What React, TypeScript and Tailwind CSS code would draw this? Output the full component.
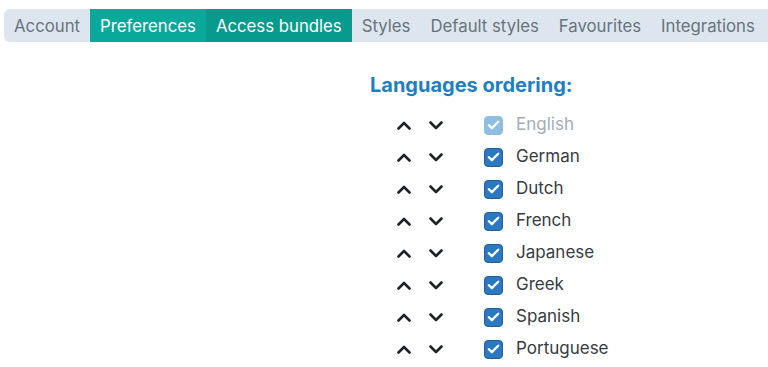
import React from 'react';

const TABS = [
  { label: 'Account', state: 'idle' },
  { label: 'Preferences', state: 'active' },
  { label: 'Access bundles', state: 'current' },
  { label: 'Styles', state: 'idle' },
  { label: 'Default styles', state: 'idle' },
  { label: 'Favourites', state: 'idle' },
  { label: 'Integrations', state: 'idle' },
];

const LANGUAGES = ['English', 'German', 'Dutch', 'French', 'Japanese', 'Greek', 'Spanish', 'Portuguese'];

function Chevron({ up }: { up?: boolean }) {
  return (
    <svg width="14" height="9" viewBox="0 0 14 9" className="text-[#1d2329]">
      <path
        d={up ? 'M1.5 7.5 L7 2 L12.5 7.5' : 'M1.5 1.5 L7 7 L12.5 1.5'}
        fill="none"
        stroke="currentColor"
        strokeWidth="2.6"
        strokeLinecap="round"
        strokeLinejoin="round"
      />
    </svg>
  );
}

function Checkbox({ disabled }: { disabled?: boolean }) {
  return (
    <span
      className={`w-[19px] h-[19px] rounded-[4px] flex items-center justify-center border ${
        disabled ? 'bg-[#8fbee3] border-[#8fbee3]' : 'bg-[#2a79c2] border-[#1e5f9c]'
      }`}
    >
      <svg width="13" height="10" viewBox="0 0 13 10">
        <path d="M1.8 5.2 L4.9 8.1 L11.2 1.8" fill="none" stroke="white" strokeWidth="2.3" strokeLinecap="round" strokeLinejoin="round" />
      </svg>
    </span>
  );
}

export default function App() {
  return (
    <div className="w-[768px] h-[367px] bg-white overflow-hidden font-['Inter','Liberation_Sans',sans-serif]">
      {/* Tab bar */}
      <div className="ml-[4px] mt-[9px] h-[33px] w-[800px] bg-[#dde6ee] rounded-l-[6px] flex text-[16.75px]">
        {TABS.map((t) => (
          <div
            key={t.label}
            className={`px-[10px] pt-[2px] flex items-center whitespace-nowrap ${
              t.state === 'active'
                ? 'bg-[#0aa89a] text-white'
                : t.state === 'current'
                ? 'bg-[#089a8c] text-white'
                : 'text-[#68737d]'
            }`}
          >
            {t.label}
          </div>
        ))}
      </div>

      {/* Languages ordering */}
      <div className="ml-[370px] mt-[29px]">
        <h2 className="text-[20px] font-bold text-[#1e7ec4] leading-[28px]">Languages ordering:</h2>
        <div className="mt-[10px] flex flex-col">
          {LANGUAGES.map((lang, i) => (
            <div key={lang} className="h-[32px] flex items-center">
              <button className="ml-[18px] w-[32px] h-[32px] flex items-center justify-center">
                <Chevron up />
              </button>
              <button className="w-[32px] h-[32px] flex items-center justify-center">
                <Chevron />
              </button>
              <div className="ml-[32px]">
                <Checkbox disabled={i === 0} />
              </div>
              <span className={`ml-[13px] text-[17px] ${i === 0 ? 'text-[#a3adb7]' : 'text-[#363c42]'}`}>{lang}</span>
            </div>
          ))}
        </div>
      </div>
    </div>
  );
}
